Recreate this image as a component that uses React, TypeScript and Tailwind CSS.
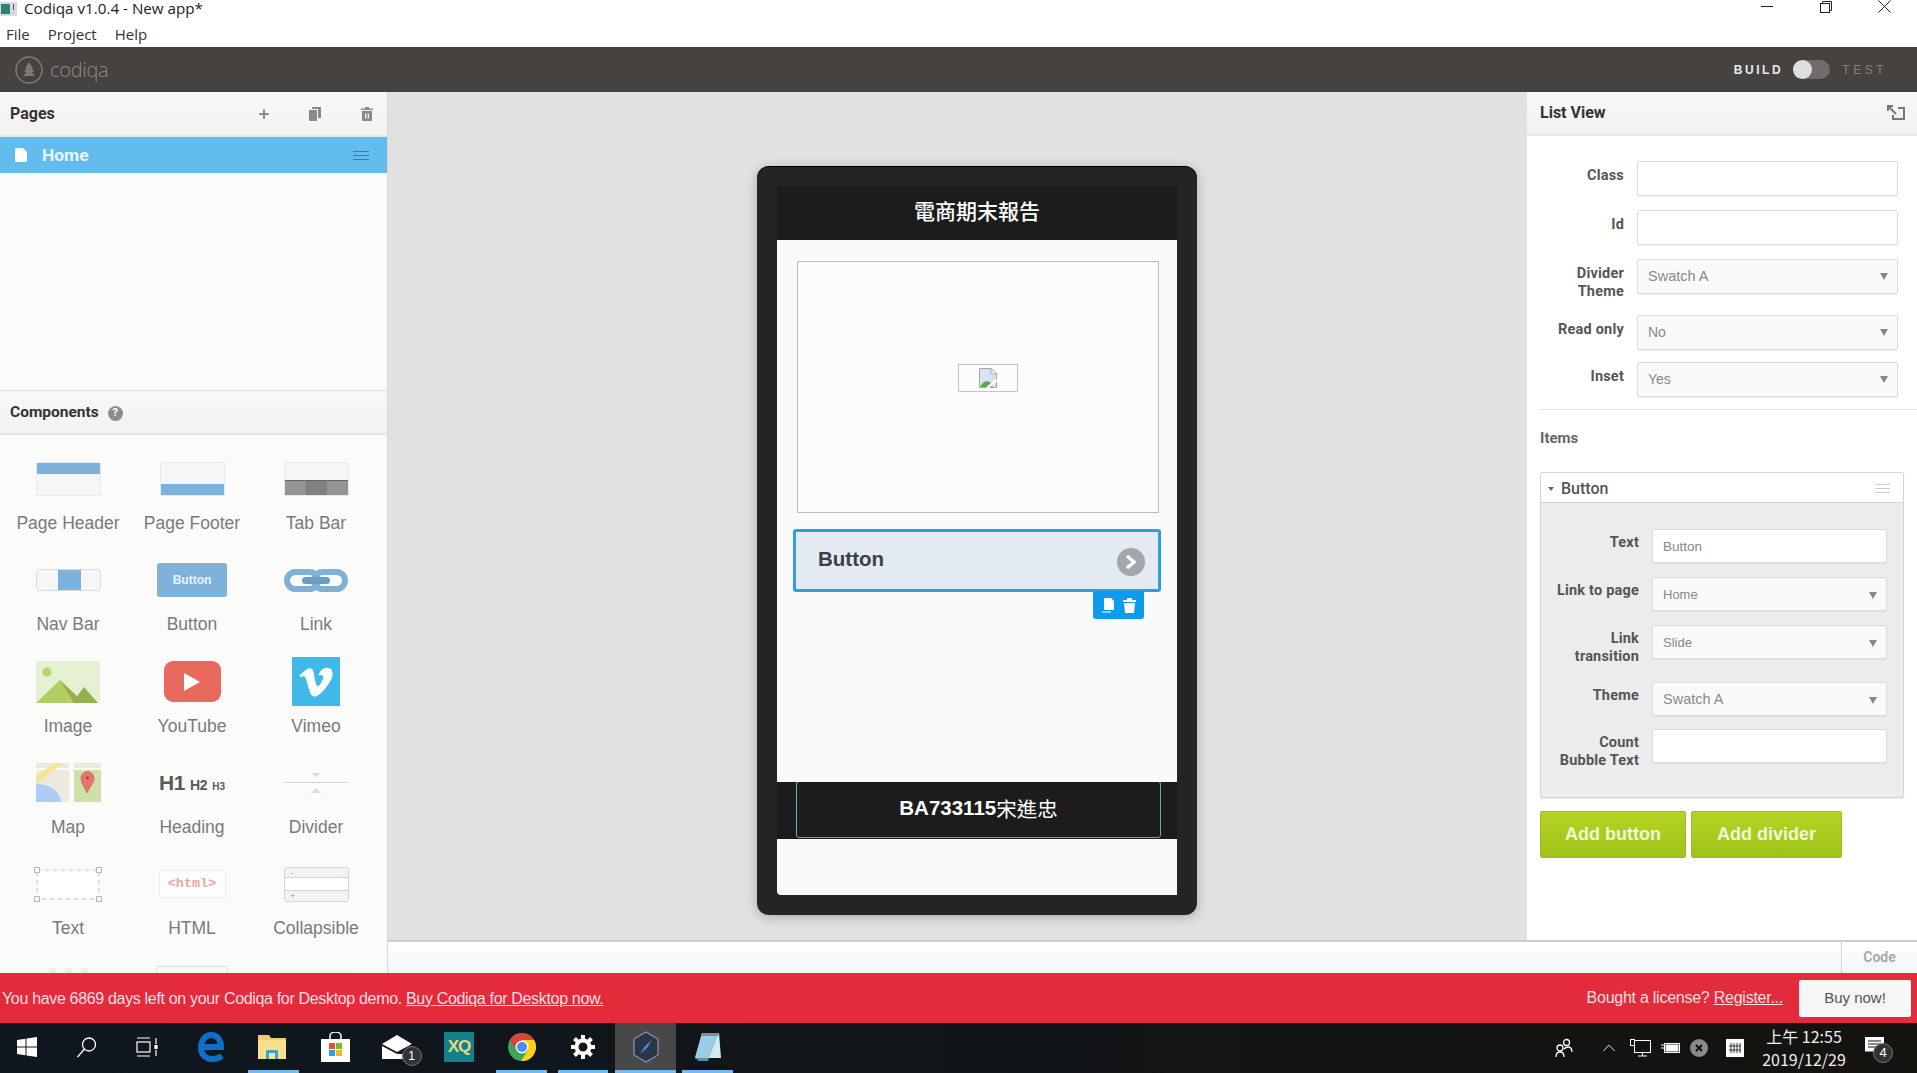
import { ChevronUp, Plus } from "lucide-react";
import { FaVimeoV } from "react-icons/fa";
import type { ReactNode } from "react";

const PageHeaderIcon = () => (
  <div className="flex h-[34px] w-[65px] flex-col rounded-[2px] border border-[#e6e8ea] bg-[#f4f6f8]">
    <div className="h-[11px] bg-[#7db2dc]" />
  </div>
);

const PageFooterIcon = () => (
  <div className="flex h-[34px] w-[65px] flex-col justify-end rounded-[2px] border border-[#e6e8ea] bg-[#f4f6f8]">
    <div className="h-[11px] bg-[#7db2dc]" />
  </div>
);

const TabBarIcon = () => (
  <div className="flex h-[34px] w-[65px] flex-col justify-end rounded-[2px] border border-[#e6e8ea] bg-[#f4f6f8]">
    <div className="grid h-[15px] grid-cols-3 border-t border-[#666] bg-[#949494]">
      <div />
      <div className="bg-[#808080]" />
      <div />
    </div>
  </div>
);

const NavBarIcon = () => (
  <div className="grid h-[22px] w-[65px] grid-cols-[21px_23px_21px] overflow-hidden rounded-[4px] border border-[#d8dadc] bg-[#f4f6f8]">
    <div />
    <div className="bg-[#7db2dc]" />
    <div />
  </div>
);

const ButtonIcon = () => (
  <div className="flex h-[34px] w-[70px] items-center justify-center rounded-[3px] bg-[#7eb2da] font-['Liberation_Sans',sans-serif] text-[12px] font-bold text-[#e8f2fa]">
    Button
  </div>
);

const LinkIcon = () => (
  <svg width="64" height="23" viewBox="0 0 64 23" fill="none">
    <rect x="3" y="3" width="31" height="17" rx="8.5" stroke="#7fb0d6" strokeWidth="6" />
    <rect x="30" y="3" width="31" height="17" rx="8.5" stroke="#7fb0d6" strokeWidth="6" />
    <rect x="18" y="8" width="28" height="7" rx="3.5" fill="#6c9dc4" />
  </svg>
);

const ImageIcon = () => (
  <svg width="64" height="42" viewBox="0 0 64 42">
    <rect width="64" height="42" fill="#e6f0d2" />
    <circle cx="11" cy="11" r="4.5" fill="#b4d66a" />
    <path d="M0 42 L24 19 L48 42 Z" fill="#b2cf63" />
    <path d="M24 19 L48 42 L38 42 L24 19 Z" fill="#94b04e" />
    <path d="M36 42 L48 26 L62 42 Z" fill="#94b04e" />
  </svg>
);

const YoutubeIcon = () => (
  <div className="flex h-[41px] w-[57px] items-center justify-center rounded-[9px] bg-[#e8695d]">
    <svg width="18" height="20" viewBox="0 0 18 20">
      <path d="M1 1 L17 10 L1 19 Z" fill="#ffffff" />
    </svg>
  </div>
);

const VimeoIcon = () => (
  <div className="flex h-[49px] w-[48px] items-center justify-center bg-[#3fb9e8] text-white">
    <FaVimeoV size={38} />
  </div>
);

const MapIcon = () => (
  <svg width="65" height="39" viewBox="0 0 65 39">
    <rect width="33" height="39" fill="#eee9df" />
    <rect x="38" width="27" height="39" fill="#cfdfa9" />
    <rect x="38" width="27" height="5" fill="#eee9df" />
    <rect x="33" width="5" height="39" fill="#fbfbfa" />
    <rect x="38" y="5" width="27" height="2" fill="#fbfbfa" />
    <rect y="5" width="33" height="2" fill="#fbfbfa" />
    <path d="M0 39 V21 A25 18 0 0 1 25 39 Z" fill="#afccf5" />
    <path d="M0 13 L19 0 H27 L0 21 Z" fill="#f6e58f" />
    <path d="M51 30 C48 23 45 20 45 15 A6.5 6.5 0 0 1 58 15 C58 20 54 23 51 30 Z" fill="#e8746d" stroke="#b95b55" strokeWidth="0.6" />
    <circle cx="51.5" cy="15" r="1.4" fill="#8f3f3a" />
  </svg>
);

const HeadingIcon = () => (
  <div className="flex items-baseline gap-[5px] font-['Liberation_Sans',sans-serif] font-bold text-[#5a5a5a]">
    <span className="text-[21px] tracking-[-0.5px]">H1</span>
    <span className="text-[14px] tracking-[-0.3px]">H2</span>
    <span className="text-[10px]">H3</span>
  </div>
);

const DividerIcon = () => (
  <svg width="64" height="24" viewBox="0 0 64 24">
    <path d="M27 2 H37 L32 6 Z" fill="#dddddd" />
    <rect y="11" width="64" height="1" fill="#d4d4d4" />
    <path d="M27 22 H37 L32 17 Z" fill="#dddddd" />
  </svg>
);

const TextIcon = () => (
  <svg width="68" height="35" viewBox="0 0 68 35" fill="none">
    <rect x="3" y="3" width="62" height="29" fill="#ffffff" stroke="#c4c4c4" strokeDasharray="4 4" />
    {[
      [0, 0],
      [62, 0],
      [0, 29],
      [62, 29],
    ].map(([x, y]) => (
      <rect key={`${x}-${y}`} x={x + 0.5} y={y + 0.5} width="5" height="5" fill="#fbfbfa" stroke="#b8b8b8" />
    ))}
  </svg>
);

const HtmlIcon = () => (
  <div className="flex h-[28px] w-[67px] items-center justify-center rounded-[2px] border border-[#eeeeee] bg-[#fdfdfd] font-['Liberation_Mono',monospace] text-[13.5px] font-bold text-[#e8a6a6]">
    {"<html>"}
  </div>
);

const CollapsibleIcon = () => (
  <div className="flex h-[35px] w-[65px] flex-col overflow-hidden rounded-[3px] border border-[#d4d4d4] bg-white text-[8px] leading-[9px] text-[#9a9a9a]">
    <div className="h-[10px] border-b border-[#d4d4d4] bg-[#f2f2f2] pl-[6px]">-</div>
    <div className="flex-1" />
    <div className="h-[11px] border-t border-[#d4d4d4] bg-[#f2f2f2] pl-[6px]">+</div>
  </div>
);

const components: { name: string; icon: ReactNode }[] = [
  { name: "Page Header", icon: <PageHeaderIcon /> },
  { name: "Page Footer", icon: <PageFooterIcon /> },
  { name: "Tab Bar", icon: <TabBarIcon /> },
  { name: "Nav Bar", icon: <NavBarIcon /> },
  { name: "Button", icon: <ButtonIcon /> },
  { name: "Link", icon: <LinkIcon /> },
  { name: "Image", icon: <ImageIcon /> },
  { name: "YouTube", icon: <YoutubeIcon /> },
  { name: "Vimeo", icon: <VimeoIcon /> },
  { name: "Map", icon: <MapIcon /> },
  { name: "Heading", icon: <HeadingIcon /> },
  { name: "Divider", icon: <DividerIcon /> },
  { name: "Text", icon: <TextIcon /> },
  { name: "HTML", icon: <HtmlIcon /> },
  { name: "Collapsible", icon: <CollapsibleIcon /> },
];

const TitleBar = () => (
  <div className="flex h-[22px] items-start justify-between bg-white pr-[3px]">
    <div className="flex items-center gap-[7px]">
      <svg width="17" height="14" viewBox="0 0 17 14">
        <rect width="17" height="14" fill="#d5dbe0" />
        <rect x="1" y="2" width="9" height="10" fill="#2f7f77" />
        <rect x="13" y="2" width="1" height="6" fill="#555" />
      </svg>
      <span className="font-['Open_Sans',sans-serif] text-[15.2px] leading-[17px] text-[#222]">Codiqa v1.0.4 - New app*</span>
    </div>
    <div className="flex">
      <div className="flex h-[12px] w-[59px] items-center justify-center">
        <div className="h-px w-[12px] bg-[#222]" />
      </div>
      <div className="flex h-[13px] w-[59px] items-center justify-center">
        <svg width="12" height="12" viewBox="0 0 12 12" fill="none" stroke="#222">
          <rect x="0.5" y="2.5" width="9" height="9" />
          <path d="M2.5 2.5 V0.5 H11.5 V9.5 H9.5" />
        </svg>
      </div>
      <div className="flex h-[13px] w-[59px] items-center justify-center">
        <svg width="13" height="13" viewBox="0 0 13 13" stroke="#222">
          <path d="M0.5 0.5 L12.5 12.5 M12.5 0.5 L0.5 12.5" />
        </svg>
      </div>
    </div>
  </div>
);

const MenuBar = () => (
  <div className="flex h-[25px] items-center gap-[18px] bg-white pl-[6px] font-['Open_Sans',sans-serif] text-[15px] text-[#333]">
    <span>File</span>
    <span>Project</span>
    <span>Help</span>
  </div>
);

const Toolbar = () => (
  <div className="flex h-[45px] items-center justify-between bg-[#464240] pr-[30px] pl-[15px]">
    <div className="flex items-center gap-[7px]">
      <svg width="28" height="28" viewBox="0 0 28 28" fill="none">
        <circle cx="14" cy="14" r="13" stroke="#7d7977" strokeWidth="1.5" />
        <path d="M14 6 L18 12 H16.5 L19 16 H16.5 L20 20 H8 L11.5 16 H9 L11.5 12 H10 Z" fill="#7d7977" />
      </svg>
      <span className="font-['Open_Sans',sans-serif] text-[20px] font-light tracking-[-0.3px] text-[#8f8b89]">codiqa</span>
    </div>
    <div className="flex items-center font-['Liberation_Sans',sans-serif] text-[12px] font-bold">
      <span className="tracking-[2.6px] text-[#e6e8ea]">BUILD</span>
      <div className="mr-[12px] ml-[10px] flex h-[19px] w-[37px] items-center rounded-full bg-[#6f6c6a]">
        <div className="size-[19px] rounded-full bg-[#dedede]" />
      </div>
      <span className="font-normal tracking-[3.5px] text-[#85817f]">TEST</span>
    </div>
  </div>
);

const PanelHeader = ({ children, className = "h-[44px]" }: { children: ReactNode; className?: string }) => (
  <div className={`flex ${className} shrink-0 items-center border-b-2 border-[#e6e6e6] bg-gradient-to-b from-[#f8f8f8] to-[#f2f2f2] font-['Roboto',sans-serif] text-[16px] font-bold text-[#333]`}>
    {children}
  </div>
);

const CopyGlyph = () => (
  <svg width="12" height="14" viewBox="0 0 12 14" fill="#8a8a8a">
    <path d="M0 3 H8 V14 H1 Q0 14 0 13 Z" />
    <path d="M3 0 H12 V11 H9 V2 H3 Z" />
  </svg>
);

const TrashGlyph = () => (
  <svg width="12" height="14" viewBox="0 0 12 14">
    <path d="M4 0 H8 V1.5 H12 V3 H0 V1.5 H4 Z M1 4 H11 V13 Q11 14 10 14 H2 Q1 14 1 13 Z" fill="#8a8a8a" />
    <rect x="4" y="6.5" width="1.3" height="5" fill="#f5f5f5" />
    <rect x="6.7" y="6.5" width="1.3" height="5" fill="#f5f5f5" />
  </svg>
);

const LeftPanel = () => (
  <aside className="flex w-[388px] shrink-0 flex-col overflow-hidden border-r border-[#d8d8d8] bg-[#fbfbfa]">
    <PanelHeader className="h-[45px]">
      <span className="ml-[10px] w-[247px]">Pages</span>
      <Plus className="text-[#8a8a8a]" size={14} strokeWidth={3.5} />
      <div className="ml-[38px]">
        <CopyGlyph />
      </div>
      <div className="ml-[40px]">
        <TrashGlyph />
      </div>
    </PanelHeader>
    <div className="flex h-[36px] shrink-0 items-center justify-between bg-[#63bcee] pr-[18px] pl-[15px]">
      <div className="flex items-center gap-[15px]">
        <svg width="12" height="14" viewBox="0 0 12 14">
          <path d="M0 1 Q0 0 1 0 H8 L12 4 V13 Q12 14 11 14 H1 Q0 14 0 13 Z" fill="#ffffff" />
        </svg>
        <span className="font-['Roboto',sans-serif] text-[17.4px] font-bold text-[#e6f6fe]">Home</span>
      </div>
      <div className="flex w-[16px] flex-col gap-[3px]">
        <div className="h-px bg-[#2f80b4]" />
        <div className="h-px bg-[#2f80b4]" />
        <div className="h-px bg-[#2f80b4]" />
      </div>
    </div>
    <div className="h-[218px] shrink-0 border-b border-[#dddddd]" />
    <PanelHeader className="h-[44px] pt-[2px]">
      <span className="ml-[10px] text-[15.5px]">Components</span>
      <span className="ml-[9px] flex size-[15px] items-center justify-center rounded-full bg-[#8c8c8c] text-[11px] text-white">?</span>
    </PanelHeader>
    <div className="grid grid-cols-[136px_112px_136px] pt-[19px]">
      {components.map((item) => (
        <div key={item.name} className="flex h-[101.25px] flex-col items-center">
          <div className="flex h-[50px] items-center justify-center">{item.icon}</div>
          <span className="mt-[9px] font-['Liberation_Sans',sans-serif] text-[17.5px] leading-[20px] whitespace-nowrap text-[#7a7a7a]">{item.name}</span>
        </div>
      ))}
      <div className="flex justify-center gap-[9px] pt-[8px]">
        <div className="size-[7px] bg-[#eeeeee]" />
        <div className="size-[7px] bg-[#eeeeee]" />
        <div className="size-[7px] bg-[#eeeeee]" />
      </div>
      <div className="flex justify-center pt-[6px]">
        <div className="h-[20px] w-[72px] rounded-[2px] border border-[#dddddd]" />
      </div>
      <div className="flex justify-center pt-[10px]">
        <div className="h-[20px] w-[65px] rounded-[2px] bg-[#f4f4f4]" />
      </div>
    </div>
  </aside>
);

const BrokenImage = () => (
  <div className="flex h-[28px] w-[60px] items-center justify-center border border-[#c4c4c4] bg-[#fcfcfc]">
    <svg width="18" height="20" viewBox="0 0 18 20">
      <path d="M0.5 0.5 H12 L17.5 6 V19.5 H0.5 Z" fill="#d6e2f6" stroke="#a8a8a8" />
      <path d="M1 19 Q5 11 11 14 L14 19 Z" fill="#5fa84a" />
      <path d="M8 20 L18 12" stroke="#ffffff" strokeWidth="2.5" />
      <path d="M12 0.5 V6 H17.5 Z" fill="#ffffff" stroke="#a8a8a8" />
    </svg>
  </div>
);

const Phone = () => (
  <div className="mt-[74px] ml-[369px] flex h-[749px] w-[440px] flex-col rounded-[12px] border-t border-black bg-[#242424] px-[20px] pt-[19px] pb-[20px] shadow-[0_2px_12px_rgba(0,0,0,0.25)]">
    <div className="flex h-[54px] shrink-0 items-center justify-center bg-[#1c1c1c] pb-[5px] font-['Noto_Sans_CJK_TC',sans-serif] text-[21px] font-medium text-white">
      電商期末報告
    </div>
    <div className="relative flex-1 bg-[#fafafa] px-[16px] pt-[21px]">
      <div className="mx-[4px] h-[252px] w-[362px] border border-[#bcbcbc] bg-[#fcfcfc] pt-[102px] pl-[160px]">
        <BrokenImage />
      </div>
      <div className="relative mt-[16px] flex h-[63px] w-[368px] items-center justify-between rounded-[3px] border-[3px] border-[#2c9fdc] bg-[#e3eaf2] pr-[13px] pl-[22px] font-['Liberation_Sans',sans-serif] text-[20.5px] font-bold text-[#3c4045]">
        <span className="-mt-[2px]">Button</span>
        <div className="mt-[2px] flex size-[28px] items-center justify-center rounded-full bg-[#a2a7ac]">
          <svg width="12" height="16" viewBox="0 0 12 16" fill="none" stroke="#ffffff" strokeWidth="3.5">
            <path d="M2 2 L9 8 L2 14" />
          </svg>
        </div>
        <div className="absolute top-[59px] right-[14px] flex h-[28px] w-[51px] items-center justify-center gap-[8px] rounded-b-[3px] bg-[#0d9cec]">
          <svg width="13" height="15" viewBox="0 0 13 15">
            <path d="M2 0 H9 L12 3 V12 H2 Z" fill="#ffffff" />
            <rect y="13.5" width="9" height="1" fill="#ffffff" />
          </svg>
          <svg width="13" height="15" viewBox="0 0 13 15">
            <path d="M4 0 H9 V2 H13 V4 H0 V2 H4 Z M1 5 H12 L11 15 H2 Z" fill="#ffffff" />
          </svg>
        </div>
      </div>
    </div>
    <div className="h-[57px] shrink-0 bg-[#1c1c1c] pl-[19px]">
      <div className="-mt-px flex h-[57px] w-[365px] items-center justify-center rounded-[3px] border border-[#6fa8bd] pb-[2px] font-['Liberation_Sans',sans-serif] text-[20.5px] font-bold text-white">
        BA733115
        <span className="font-['Noto_Sans_CJK_TC',sans-serif] text-[20.5px] font-normal">宋進忠</span>
      </div>
    </div>
    <div className="h-[56px] shrink-0 rounded-bl-[4px] bg-[#fafafa]" />
  </div>
);

const Field = ({
  label,
  value,
  select,
  sub,
  valueClass = "text-[14px]",
  className = "",
}: {
  label: string;
  value?: string;
  select?: boolean;
  sub?: boolean;
  valueClass?: string;
  className?: string;
}) => (
  <div className={`flex items-start gap-[13px] ${className}`}>
    <label
      className={`${sub ? "w-[98px] pt-[5px]" : "w-[84px] pt-[6px]"} whitespace-pre text-right font-['Roboto',sans-serif] text-[14.5px] leading-[17.5px] font-bold tracking-[0.2px] text-[#555]`}>
      {label}
    </label>
    <div
      className={`${sub ? "h-[34px] w-[235px] pt-[2px]" : "h-[35px] w-[261px]"} flex items-center justify-between rounded-[2px] border border-[#dcdcdc] pr-[9px] pl-[10px] font-['Liberation_Sans',sans-serif] ${valueClass} text-[#888] shadow-[0_1px_1px_rgba(0,0,0,0.06)] ${
        select ? "bg-[#fafafa]" : "bg-white"
      }`}>
      <span>{value}</span>
      {select && (
        <svg width="8" height="7" viewBox="0 0 8 7">
          <path d="M0 0 H8 L4 7 Z" fill="#888888" />
        </svg>
      )}
    </div>
  </div>
);

const RightPanel = () => (
  <aside className="flex w-[390px] shrink-0 flex-col bg-white">
    <PanelHeader>
      <span className="ml-[13px] flex-1 text-[#333]">List View</span>
      <svg className="mr-[12px]" width="18" height="16" viewBox="0 0 18 16" fill="none" stroke="#777" strokeWidth="2">
        <path d="M1 6 V1 H6 M1 1 L9 9" />
        <path d="M11 3 H17 V14 H6 V10" />
      </svg>
    </PanelHeader>
    <div className="pt-[25px] pl-[13px]">
      <Field label="Class" />
      <Field label="Id" className="mt-[14px]" />
      <Field label={"Divider\nTheme"} value="Swatch A" select valueClass="text-[14.5px]" className="mt-[14px]" />
      <Field label="Read only" value="No" select className="mt-[15px]" />
      <Field label="Inset" value="Yes" select className="mt-[12px]" />
      <div className="mt-[12px] h-px bg-[#e8e8e8]" />
      <div className="mt-[18px] font-['Roboto',sans-serif] text-[15px] leading-[20px] font-bold text-[#666]">Items</div>
      <div className="mt-[24px] w-[364px] rounded-[2px] border border-[#d4d4d4] bg-[#ececec] shadow-[0_1px_1px_rgba(0,0,0,0.08)]">
        <div className="flex h-[30px] items-center border-b border-[#d4d4d4] bg-white pt-[2px] pr-[13px] pl-[7px]">
          <svg width="6" height="4" viewBox="0 0 6 4">
            <path d="M0 0 H6 L3 4 Z" fill="#666666" />
          </svg>
          <span className="ml-[7px] flex-1 font-['Roboto',sans-serif] text-[16px] font-medium text-[#555]">Button</span>
          <div className="flex w-[15px] flex-col gap-[3px]">
            <div className="h-px bg-[#d0d0d0]" />
            <div className="h-px bg-[#d0d0d0]" />
            <div className="h-px bg-[#d0d0d0]" />
          </div>
        </div>
        <div className="pt-[26px] pb-[28px]">
          <Field sub label="Text" value="Button" valueClass="text-[13.5px]" />
          <Field sub label="Link to page" value="Home" select valueClass="text-[13px]" className="mt-[14px]" />
          <Field sub label={"Link\ntransition"} value="Slide" select valueClass="text-[13px]" className="mt-[14px]" />
          <Field sub label="Theme" value="Swatch A" select valueClass="text-[14.5px]" className="mt-[17px]" />
          <Field sub label={"Count\nBubble Text"} className="mt-[13px]" />
        </div>
      </div>
      <div className="mt-[13px] flex gap-[5px] font-['Liberation_Sans',sans-serif] text-[18px] font-bold text-[#f0f7d8]">
        <button className="h-[47px] w-[146px] rounded-[2px] border border-[#9dbd1c] bg-gradient-to-b from-[#b4d423] to-[#a0c31a]">Add button</button>
        <button className="h-[47px] w-[151px] rounded-[2px] border border-[#9dbd1c] bg-gradient-to-b from-[#b4d423] to-[#a0c31a]">Add divider</button>
      </div>
    </div>
  </aside>
);

const Banner = () => (
  <div className="flex h-[50px] shrink-0 items-center justify-between bg-[#e42b3c] pr-[6px] pl-[2px] font-['Liberation_Sans',sans-serif] text-[16px] text-[#fbdfe2]">
    <span className="mt-[1px] tracking-[-0.33px]">
      You have 6869 days left on your Codiqa for Desktop demo. <u>Buy Codiqa for Desktop now.</u>
    </span>
    <div className="flex items-center">
      <span className="-mt-[1px] tracking-[-0.25px]">
        Bought a license? <u>Register...</u>
      </span>
      <button className="ml-[16px] h-[37px] w-[112px] rounded-[2px] bg-[#f6f6f6] text-[15px] text-[#555]">Buy now!</button>
    </div>
  </div>
);

const WindowsIcon = () => (
  <svg width="20" height="20" viewBox="0 0 20 20" fill="#ffffff">
    <path d="M0 3 L8.5 1.8 V9.5 H0 Z M9.5 1.6 L20 0 V9.5 H9.5 Z M0 10.5 H8.5 V18.2 L0 17 Z M9.5 10.5 H20 V20 L9.5 18.4 Z" />
  </svg>
);

const SearchIcon = () => (
  <svg width="22" height="22" viewBox="0 0 22 22" fill="none" stroke="#ffffff" strokeWidth="1.3">
    <circle cx="13" cy="8.5" r="6.5" />
    <path d="M8.5 13 L1.5 21" />
  </svg>
);

const TaskViewIcon = () => (
  <svg width="22" height="20" viewBox="0 0 22 20" fill="none" stroke="#ffffff" strokeWidth="1.2">
    <rect x="1" y="5" width="13" height="10" />
    <path d="M1 1 H14 M1 19 H14 M20 1 V7 M20 13 V19" />
    <rect x="19" y="8.5" width="2" height="3" fill="#ffffff" />
  </svg>
);

const EdgeIcon = () => (
  <svg width="26" height="30" viewBox="0 0 26 30" fill="none" stroke="#0f6fc6" strokeWidth="6">
    <path d="M3 15 H23 C23 8 19 3 13 3 C7 3 3 9 3 16 C3 23 8 27 14 27 C18 27 21 26 24 24" />
  </svg>
);

const FolderIcon = () => (
  <svg className="-ml-[4px]" width="28" height="26" viewBox="0 0 28 26">
    <path d="M0 1 H11 L13 4 H28 V25 H0 Z" fill="#f2cd6b" />
    <rect y="6" width="28" height="19" fill="#fbdf8d" />
    <path d="M8 25 V16 H20 V25 H17 V19 H11 V25 Z" fill="#3aa3d8" />
  </svg>
);

const StoreIcon = () => (
  <svg width="29" height="30" viewBox="0 0 29 30" fill="none">
    <path d="M9 7 V4 A5.5 4 0 0 1 20 4 V7" stroke="#ffffff" strokeWidth="1.5" />
    <rect y="7" width="29" height="23" fill="#ffffff" />
    <rect x="8" y="11" width="6" height="6" fill="#ea4e2c" />
    <rect x="15" y="11" width="6" height="6" fill="#7dbb2a" />
    <rect x="8" y="18" width="6" height="6" fill="#2c9fe8" />
    <rect x="15" y="18" width="6" height="6" fill="#f5b81f" />
  </svg>
);

const MailIcon = () => (
  <div className="relative">
    <svg width="30" height="24" viewBox="0 0 30 24">
      <path d="M0 9 L15 0 L30 9 L15 17 Z" fill="#ffffff" />
      <path d="M0 11 L15 19 L30 11 V24 H0 Z" fill="#ffffff" />
      <path d="M30 9 L15 19 H30 Z" fill="#101218" />
    </svg>
    <span className="absolute top-[11px] left-[20px] flex size-[20px] items-center justify-center rounded-full border border-[#777] bg-[#333] font-['Liberation_Sans',sans-serif] text-[12px] text-white">
      1
    </span>
  </div>
);

const XqIcon = () => (
  <div className="flex h-[30px] w-[30px] items-center justify-center bg-[#14808c] font-['Liberation_Sans',sans-serif] text-[17px] font-bold tracking-[-1px] text-[#e7d77a]">
    XQ
  </div>
);

const ChromeIcon = () => (
  <svg width="28" height="28" viewBox="0 0 28 28">
    <circle cx="14" cy="14" r="14" fill="#3aa757" />
    <path d="M14 0 A14 14 0 0 0 2 7 L8 17 L14 7 H26 A14 14 0 0 0 14 0 Z" fill="#db4437" />
    <path d="M26 7 H14 L20 17 L13 28 A14 14 0 0 0 26 7 Z" fill="#fcd116" />
    <circle cx="14" cy="14" r="6.5" fill="#ffffff" />
    <circle cx="14" cy="14" r="5" fill="#4a8af4" />
  </svg>
);

const GearIcon = () => (
  <svg width="24" height="24" viewBox="0 0 24 24" fill="none" stroke="#ffffff">
    <circle cx="12" cy="12" r="6.5" strokeWidth="4" />
    <path d="M12 0 V5 M12 19 V24 M0 12 H5 M19 12 H24 M3.5 3.5 L7 7 M17 17 L20.5 20.5 M20.5 3.5 L17 7 M7 17 L3.5 20.5" strokeWidth="4" />
  </svg>
);

const CodiqaIcon = () => (
  <svg width="26" height="32" viewBox="0 0 26 32">
    <path d="M13 1 L25 8 V24 L13 31 L1 24 V8 Z" fill="#2a3548" stroke="#8a95a8" strokeWidth="1.2" />
    <path d="M19 9 L14 17 L7 23 L12 15 Z" fill="#3f8de0" />
  </svg>
);

const NotepadIcon = () => (
  <svg width="28" height="30" viewBox="0 0 28 30">
    <path d="M8 1 H25 L27 26 H1 Z" fill="#d4eaf5" />
    <path d="M8 1 L1 26 L5 29 H14 L25 1 Z" fill="#7fc0dc" opacity="0.7" />
    <path d="M8 1 H25 L24 4 H7 Z" fill="#8a8a8a" />
  </svg>
);

const taskbarApps: { key: string; width: string; node: ReactNode; active?: boolean; underline?: boolean }[] = [
  { key: "start", width: "w-[54px]", node: <WindowsIcon /> },
  { key: "search", width: "w-[66px]", node: <SearchIcon /> },
  { key: "view", width: "w-[54px]", node: <TaskViewIcon /> },
  { key: "edge", width: "w-[74px]", node: <EdgeIcon /> },
  { key: "files", width: "w-[51px]", node: <FolderIcon />, underline: true },
  { key: "store", width: "w-[72px]", node: <StoreIcon /> },
  { key: "mail", width: "w-[51px]", node: <MailIcon /> },
  { key: "xq", width: "w-[74px]", node: <XqIcon /> },
  { key: "chrome", width: "w-[51px]", node: <ChromeIcon />, underline: true },
  { key: "gear", width: "ml-[11px] w-[50px]", node: <GearIcon />, underline: true },
  { key: "codiqa", width: "ml-[7px] w-[61px]", node: <CodiqaIcon />, active: true, underline: true },
  { key: "notepad", width: "ml-[6px] w-[51px]", node: <NotepadIcon />, underline: true },
];

const Tray = () => (
  <div className="flex items-center">
    <svg width="18" height="20" viewBox="0 0 18 20" fill="none" stroke="#ffffff" strokeWidth="1.3">
      <circle cx="11.5" cy="4.5" r="3" />
      <circle cx="5" cy="10" r="3" />
      <path d="M1 19 Q1 14 5 14 Q9 14 9 19 M9 11 Q11 9 13 9 Q17 9 17 14" />
    </svg>
    <ChevronUp className="ml-[25px] text-white" size={22} strokeWidth={1} />
    <svg className="ml-[10px]" width="21" height="18" viewBox="0 0 21 18" fill="none" stroke="#ffffff">
      <rect x="4.5" y="1.5" width="16" height="12" />
      <path d="M12.5 14 V17 M8 17 H17" />
      <rect x="0.5" y="0.5" width="4" height="6" fill="#101218" />
    </svg>
    <svg className="ml-[10px]" width="20" height="12" viewBox="0 0 20 12" fill="none" stroke="#ffffff">
      <rect x="3.5" y="1.5" width="15" height="9" />
      <rect x="5" y="3" width="12" height="6" fill="#ffffff" />
      <path d="M0 3 H3 M0 6 H3" />
    </svg>
    <div className="ml-[9px] flex size-[18px] items-center justify-center rounded-full bg-[#8a8a8a] text-[#101218]">
      <svg width="8" height="8" viewBox="0 0 8 8" stroke="#101218" strokeWidth="2">
        <path d="M1 1 L7 7 M7 1 L1 7" />
      </svg>
    </div>
    <div className="ml-[18px] flex size-[18px] items-center justify-center bg-white">
      <svg width="14" height="14" viewBox="0 0 14 14" stroke="#333" fill="none">
        <path d="M3 2 V12 M6 2 V12 M9 2 V12 M12 2 V12 M1 5 H13 M1 9 H13" />
      </svg>
    </div>
    <div className="ml-[18px] flex w-[84px] flex-col items-center font-['Noto_Sans_CJK_TC',sans-serif] text-[16px] leading-[23px] whitespace-nowrap text-[#eeeeee]">
      <span>上午 12:55</span>
      <span>2019/12/29</span>
    </div>
    <div className="relative mr-[32px] ml-[18px] h-[24px] w-[21px]">
      <svg width="21" height="18" viewBox="0 0 21 18" fill="#ffffff" stroke="#101218">
        <path d="M0.5 0.5 H20.5 V16 H0.5 Z" />
        <path d="M4 5 H17 M4 8 H17 M4 11 H13" />
      </svg>
      <span className="absolute top-[7px] left-[9px] flex size-[20px] items-center justify-center rounded-full border border-[#777] bg-[#333] font-['Liberation_Sans',sans-serif] text-[13px] text-white">
        4
      </span>
    </div>
  </div>
);

const Taskbar = () => (
  <div className="flex h-[50px] shrink-0 items-center justify-between bg-gradient-to-r from-[#0f1720] to-[#14130f]">
    <div className="flex h-full items-stretch">
      {taskbarApps.map((app) => (
        <div
          key={app.key}
          className={`flex ${app.width} items-center justify-center border-b-[3px] ${app.underline ? "border-[#76b9ed]" : "border-transparent"} ${app.active ? "bg-[#474847]" : ""}`}>
          {app.node}
        </div>
      ))}
    </div>
    <Tray />
  </div>
);

export default function App() {
  return (
    <div className="flex h-[1073px] w-[1917px] flex-col overflow-hidden bg-white">
      <TitleBar />
      <MenuBar />
      <Toolbar />
      <div className="flex min-h-0 flex-1">
        <LeftPanel />
        <div className="flex min-w-0 flex-1 flex-col">
          <div className="flex min-h-0 flex-1">
            <main className="min-w-0 flex-1 bg-[#e1e1e1]">
              <Phone />
            </main>
            <RightPanel />
          </div>
          <div className="flex h-[33px] shrink-0 justify-end border-t-2 border-[#cccccc] bg-gradient-to-b from-white to-[#f4f4f4]">
            <div className="flex w-[76px] items-center justify-center border-l border-[#d4d4d4] font-['Roboto',sans-serif] text-[14px] font-bold text-[#aaa]">Code</div>
          </div>
        </div>
      </div>
      <Banner />
      <Taskbar />
    </div>
  );
}
